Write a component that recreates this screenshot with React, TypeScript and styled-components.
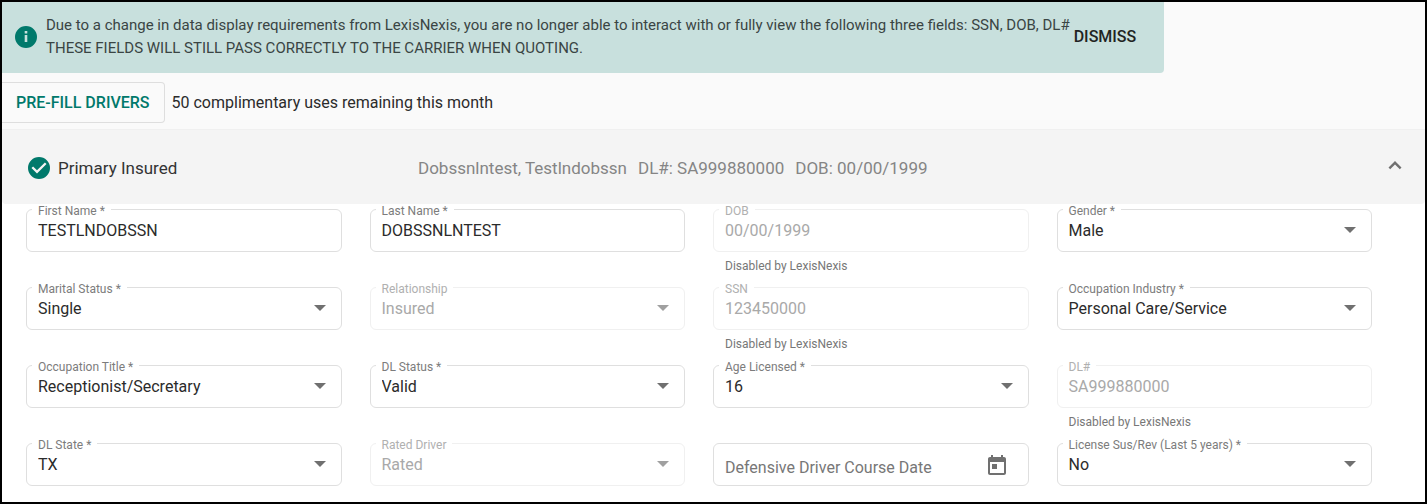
import React, { useId, useState } from "react";
import styled, { createGlobalStyle } from "styled-components";

const GlobalStyle = createGlobalStyle`
  *, *::before, *::after { box-sizing: border-box; }
  body {
    margin: 0;
    background: #fafafa;
    color: #2b2b2b;
    font-family: Roboto, "Liberation Sans", sans-serif;
    font-size: 16px;
  }
  button, input, select { font: inherit; color: inherit; }
`;

const Page = styled.main`
  min-height: 100vh;
  display: flex;
  flex-direction: column;
  border: 2px solid #000;
`;

const Banner = styled.section`
  width: fit-content;
  max-width: 100%;
  display: flex;
  align-items: center;
  padding: 12px 16px 13px 12px;
  background: #c8e0dd;
  border-radius: 0 0 4px 0;
`;

const BannerText = styled.p`
  margin: 0 0 0 8px;
  font-size: 15px;
  line-height: 23px;
  color: #3a4544;
`;

const BannerIcon = styled.svg`
  flex: none;
  width: 24px;
  height: 24px;
  fill: #00796b;
`;

const DismissButton = styled.button`
  border: 0;
  padding: 8px 12px 8px 4px;
  background: transparent;
  font-weight: 500;
  line-height: 24px;
  color: #1f2423;
  cursor: pointer;
`;

const Actions = styled.div`
  display: flex;
  align-items: center;
  gap: 7px;
  padding: 9px 0 6px;
`;

const PrefillButton = styled.button`
  height: 41px;
  padding: 0 14px;
  border: 1px solid #dedede;
  border-left: 0;
  border-radius: 0 4px 4px 0;
  background: #fafafa;
  font-weight: 500;
  color: #00796b;
  cursor: pointer;
`;

const Panel = styled.section`
  flex: 1;
  background: #fff;
`;

const PanelHeader = styled.button`
  width: 100%;
  height: 75px;
  display: flex;
  align-items: center;
  padding: 2px 18px 0 25px;
  border: 0;
  border-top: 1px solid #f0f0f0;
  border-radius: 0 0 4px 4px;
  background: #f4f4f4;
  text-align: left;
  font-size: 17px;
  cursor: pointer;
`;

const PanelTitle = styled.span`
  flex: 0 0 391px;
  display: flex;
  align-items: center;
  gap: 7px;
  color: #333;
`;

const PanelSummary = styled.span`
  flex: 1;
  display: flex;
  gap: 11px;
  color: #858585;
`;

const HeaderIcon = styled.svg<{ $color: string }>`
  flex: none;
  width: 24px;
  height: 24px;
  fill: ${(p) => p.$color};
`;

const FieldGrid = styled.form`
  display: grid;
  grid-template-columns: repeat(4, minmax(0, 1fr));
  grid-auto-rows: 43px;
  gap: 35px 28px;
  padding: 5px 53px 16px 24px;
`;

const Field = styled.div`
  min-width: 0;
`;

const Outline = styled.div<{ $disabled?: boolean }>`
  position: relative;
  display: grid;
  align-items: center;
  height: 43px;
  border: 1px solid ${(p) => (p.$disabled ? "#f0f0f0" : "#dfdfdf")};
  border-radius: 6px;
  color: ${(p) => (p.$disabled ? "#a9a9a9" : "#2b2b2b")};

  > * { grid-area: 1 / 1; }
`;

const Label = styled.label<{ $disabled?: boolean }>`
  position: absolute;
  top: -5px;
  left: 5px;
  padding: 0 6px;
  background: #fff;
  font-size: 12px;
  line-height: 12px;
  white-space: nowrap;
  color: ${(p) => (p.$disabled ? "#b0b0b0" : "#7c7c7c")};
`;

const TextInput = styled.input`
  width: 100%;
  height: 100%;
  padding: 0 11px;
  border: 0;
  background: transparent;
  outline: none;

  &:disabled { color: inherit; }
`;

const DateInput = styled(TextInput)`
  padding-top: 6px;

  &::placeholder { color: #777; opacity: 1; }
`;

const Select = styled.select`
  appearance: none;
  width: 100%;
  height: 100%;
  padding: 0 40px 0 11px;
  border: 0;
  background: transparent;
  outline: none;

  &:disabled { color: inherit; opacity: 1; }
`;

const Arrow = styled.svg<{ $disabled?: boolean }>`
  width: 12px;
  height: 6px;
  justify-self: end;
  margin: 0 15px 2px 0;
  pointer-events: none;
  fill: ${(p) => (p.$disabled ? "#a0a0a0" : "#707070")};
`;

const CalendarButton = styled.button`
  justify-self: end;
  display: flex;
  margin: 2px 19px 0 0;
  padding: 0;
  border: 0;
  background: transparent;
  color: #707070;
  cursor: pointer;
`;

const Hint = styled.p`
  margin: 7px 0 0 12px;
  font-size: 12px;
  line-height: 14px;
  color: #777;
`;

type FieldSpec = {
  label: string;
  value: string;
  kind: "text" | "select" | "date";
  disabled?: boolean;
  hint?: string;
};

const lexis = "Disabled by LexisNexis";

const fields: FieldSpec[] = [
  { label: "First Name *", value: "TESTLNDOBSSN", kind: "text" },
  { label: "Last Name *", value: "DOBSSNLNTEST", kind: "text" },
  { label: "DOB", value: "00/00/1999", kind: "text", disabled: true, hint: lexis },
  { label: "Gender *", value: "Male", kind: "select" },
  { label: "Marital Status *", value: "Single", kind: "select" },
  { label: "Relationship", value: "Insured", kind: "select", disabled: true },
  { label: "SSN", value: "123450000", kind: "text", disabled: true, hint: lexis },
  { label: "Occupation Industry *", value: "Personal Care/Service", kind: "select" },
  { label: "Occupation Title *", value: "Receptionist/Secretary", kind: "select" },
  { label: "DL Status *", value: "Valid", kind: "select" },
  { label: "Age Licensed *", value: "16", kind: "select" },
  { label: "DL#", value: "SA999880000", kind: "text", disabled: true, hint: lexis },
  { label: "DL State *", value: "TX", kind: "select" },
  { label: "Rated Driver", value: "Rated", kind: "select", disabled: true },
  { label: "Defensive Driver Course Date", value: "", kind: "date" },
  { label: "License Sus/Rev (Last 5 years) *", value: "No", kind: "select" },
];

function FormField({ label, value, kind, disabled, hint }: FieldSpec) {
  const id = useId();
  return (
    <Field>
      <Outline $disabled={disabled}>
        {kind === "text" && <TextInput id={id} defaultValue={value} disabled={disabled} />}
        {kind === "select" && (
          <>
            <Select id={id} defaultValue={value} disabled={disabled}>
              <option>{value}</option>
            </Select>
            <Arrow $disabled={disabled} viewBox="0 0 12 6" aria-hidden="true">
              <path d="M0 0h12L6 6z" />
            </Arrow>
          </>
        )}
        {kind === "date" ? (
          <>
            <DateInput id={id} aria-label={label} placeholder={label} />
            <CalendarButton type="button" aria-label="Open calendar">
              <svg width="24" height="24" viewBox="0 0 24 24" fill="currentColor" aria-hidden="true">
                <path d="M19 3h-1V1h-2v2H8V1H6v2H5c-1.11 0-2 .9-2 2v14c0 1.1.89 2 2 2h14c1.1 0 2-.9 2-2V5c0-1.1-.9-2-2-2zm0 16H5V8h14v11zM7 10h5v5H7z" />
              </svg>
            </CalendarButton>
          </>
        ) : (
          <Label htmlFor={id} $disabled={disabled}>{label}</Label>
        )}
      </Outline>
      {hint && <Hint>{hint}</Hint>}
    </Field>
  );
}

export default function App() {
  const [showBanner, setShowBanner] = useState(true);
  const [open, setOpen] = useState(true);

  return (
    <>
      <GlobalStyle />
      <Page>
        {showBanner && (
          <Banner>
            <BannerIcon viewBox="0 0 24 24" aria-hidden="true">
              <path d="M12 1a11 11 0 1 0 0 22 11 11 0 0 0 0-22zm1.3 16h-2.6v-7h2.6v7zm0-8.500h-2.600V6h2.600v2.500z" />
            </BannerIcon>
            <BannerText>
              Due to a change in data display requirements from LexisNexis, you are no longer able to
              interact with or fully view the following three fields: SSN, DOB, DL#
              <br />
              THESE FIELDS WILL STILL PASS CORRECTLY TO THE CARRIER WHEN QUOTING.
            </BannerText>
            <DismissButton type="button" onClick={() => setShowBanner(false)}>DISMISS</DismissButton>
          </Banner>
        )}
        <Actions>
          <PrefillButton type="button">PRE-FILL DRIVERS</PrefillButton>
          <span>50 complimentary uses remaining this month</span>
        </Actions>
        <Panel>
          <PanelHeader type="button" aria-expanded={open} onClick={() => setOpen(!open)}>
            <PanelTitle>
              <HeaderIcon $color="#00796b" viewBox="0 0 24 24" aria-hidden="true">
                <path d="M12 1a11 11 0 1 0 0 22 11 11 0 0 0 0-22zm-2 16.500-5.500-5.500 1.600-1.600 3.900 3.900 7.900-7.900 1.600 1.600L10 17.500z" />
              </HeaderIcon>
              Primary Insured
            </PanelTitle>
            <PanelSummary>
              <span>Dobssnlntest, Testlndobssn</span>
              <span>DL#: SA999880000</span>
              <span>DOB: 00/00/1999</span>
            </PanelSummary>
            <HeaderIcon $color="#707070" viewBox="0 0 24 24" aria-hidden="true">
              <path d="M12 5l-6.500 6.500 1.700 1.700L12 8.400l4.800 4.800 1.700-1.700z" />
            </HeaderIcon>
          </PanelHeader>
          {open && (
            <FieldGrid>
              {fields.map((f) => (
                <FormField key={f.label} {...f} />
              ))}
            </FieldGrid>
          )}
        </Panel>
      </Page>
    </>
  );
}
